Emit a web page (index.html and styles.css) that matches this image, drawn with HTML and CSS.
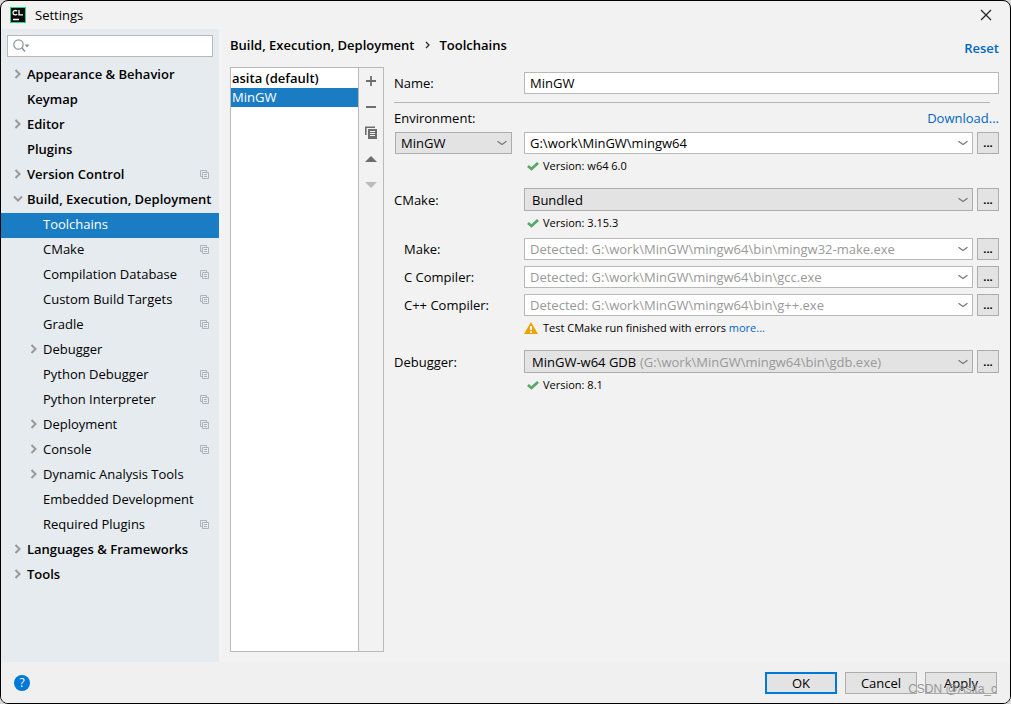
FILE: index.html
```html
<!DOCTYPE html>
<html lang="en">
<head>
<meta charset="utf-8">
<title>Settings</title>
<link rel="stylesheet" href="styles.css">
</head>
<body>
<svg class="sprite" aria-hidden="true">
  <symbol id="right" viewBox="0 0 8 10"><path d="M1.5 1 5.500 5l-4 4" fill="none" stroke="#999" stroke-width="2"/></symbol>
  <symbol id="down" viewBox="0 0 10 8"><path d="M1 1.500 5 5.500l4-4" fill="none" stroke="#999" stroke-width="2"/></symbol>
  <symbol id="project" viewBox="0 0 9 9"><path d="M2 6.500H.5v-6h6V2M2.500 2.500h6v6h-6zM4 4.500h3M4 6.500h3" fill="none" stroke="#a9b4bb"/></symbol>
  <symbol id="chevron" viewBox="0 0 10 6"><path d="M.5 1.200 5 4.500 9.500 1.200" fill="none" stroke="#777" stroke-width="1.200"/></symbol>
  <symbol id="check" viewBox="0 0 12 9"><path d="M1 4 4.500 7 11 1" fill="none" stroke="#59a869" stroke-width="2.800"/></symbol>
</svg>
<div class="dialog">
  <header class="titlebar">
    <svg class="logo" viewBox="0 0 16 16" aria-hidden="true"><path d="M0 0h16v16H0z" fill="#21d789"/><path d="M1 1h14v14H1z" fill="#0b0b0b"/><path d="M7 4.300C6.500 3.300 3 2.800 3 5.700S6.500 8.200 7 7.100M9 3v4.800h4M3 12.500h6" fill="none" stroke="#fff" stroke-width="1.300"/></svg>
    <span>Settings</span>
    <button class="close" aria-label="Close"><svg viewBox="0 0 12 12"><path d="m1 1 10 10M11 1 1 11" fill="none" stroke="#222" stroke-width="1.200"/></svg></button>
  </header>
  <div class="body">
    <nav class="sidebar" aria-label="Settings categories">
      <label class="search">
        <svg viewBox="0 0 17 14" aria-hidden="true"><circle cx="5.500" cy="5.500" r="4.700" fill="none" stroke="#8a959b" stroke-width="1.200"/><path d="m9 9 3 3.500" stroke="#8a959b" stroke-width="1.500"/><path d="M11.500 5.500h5L14 8.500z" fill="#8a959b"/></svg>
        <input type="text" aria-label="Search settings">
      </label>
      <ul class="tree">
        <li class="group"><svg class="arrow"><use href="#right"/></svg><span>Appearance &amp; Behavior</span></li>
        <li class="group"><i class="arrow"></i><span>Keymap</span></li>
        <li class="group"><svg class="arrow"><use href="#right"/></svg><span>Editor</span></li>
        <li class="group"><i class="arrow"></i><span>Plugins</span></li>
        <li class="group"><svg class="arrow"><use href="#right"/></svg><span>Version Control</span><svg class="mark"><use href="#project"/></svg></li>
        <li class="group"><svg class="arrow"><use href="#down"/></svg><span>Build, Execution, Deployment</span></li>
        <li class="child selected"><i class="arrow"></i><span>Toolchains</span></li>
        <li class="child"><i class="arrow"></i><span>CMake</span><svg class="mark"><use href="#project"/></svg></li>
        <li class="child"><i class="arrow"></i><span>Compilation Database</span><svg class="mark"><use href="#project"/></svg></li>
        <li class="child"><i class="arrow"></i><span>Custom Build Targets</span><svg class="mark"><use href="#project"/></svg></li>
        <li class="child"><i class="arrow"></i><span>Gradle</span><svg class="mark"><use href="#project"/></svg></li>
        <li class="child"><svg class="arrow"><use href="#right"/></svg><span>Debugger</span></li>
        <li class="child"><i class="arrow"></i><span>Python Debugger</span><svg class="mark"><use href="#project"/></svg></li>
        <li class="child"><i class="arrow"></i><span>Python Interpreter</span><svg class="mark"><use href="#project"/></svg></li>
        <li class="child"><svg class="arrow"><use href="#right"/></svg><span>Deployment</span><svg class="mark"><use href="#project"/></svg></li>
        <li class="child"><svg class="arrow"><use href="#right"/></svg><span>Console</span><svg class="mark"><use href="#project"/></svg></li>
        <li class="child"><svg class="arrow"><use href="#right"/></svg><span>Dynamic Analysis Tools</span></li>
        <li class="child"><i class="arrow"></i><span>Embedded Development</span></li>
        <li class="child"><i class="arrow"></i><span>Required Plugins</span><svg class="mark"><use href="#project"/></svg></li>
        <li class="group"><svg class="arrow"><use href="#right"/></svg><span>Languages &amp; Frameworks</span></li>
        <li class="group"><svg class="arrow"><use href="#right"/></svg><span>Tools</span></li>
      </ul>
    </nav>
    <main class="page">
      <div class="heading">
        <h1 class="crumbs"><span>Build, Execution, Deployment</span><svg viewBox="0 0 5 8" aria-hidden="true"><path d="m1 1 3 3-3 3" fill="none" stroke="#222" stroke-width="1.200"/></svg><span>Toolchains</span></h1>
        <a class="reset" href="#">Reset</a>
      </div>
      <div class="content">
        <section class="toolchains">
          <ul class="list">
            <li class="default">asita (default)</li>
            <li class="selected">MinGW</li>
          </ul>
          <div class="toolbar">
            <button aria-label="Add"><svg viewBox="0 0 12 12"><path d="M1 6h10M6 1v10" stroke="#6e6e6e" stroke-width="1.800"/></svg></button>
            <button aria-label="Remove"><svg viewBox="0 0 12 12"><path d="M1 6h10" stroke="#6e6e6e" stroke-width="2"/></svg></button>
            <button aria-label="Copy"><svg viewBox="0 0 12 12"><path d="M.8 8V.2H10" fill="none" stroke="#6e6e6e" stroke-width="1.600"/><path d="M3 2h9v10H3z" fill="#6e6e6e"/><path d="M5 4.500h5M5 6.500h5M5 8.500h5" stroke="#f2f2f2"/></svg></button>
            <button aria-label="Move up"><svg viewBox="0 0 12 12"><path d="M0 9h12L6 3z" fill="#6e6e6e"/></svg></button>
            <button aria-label="Move down" disabled><svg viewBox="0 0 12 12"><path d="M0 3h12L6 9z" fill="#bcbcbc"/></svg></button>
          </div>
        </section>
        <form class="form">
          <div class="row">
            <label class="label" for="name">Name:</label>
            <input class="field" id="name" type="text" value="MinGW">
          </div>
          <hr class="rule">
          <div class="env">
            <label for="environment">Environment:</label>
            <a href="#">Download...</a>
          </div>
          <div class="row">
            <div class="label kind">
              <div class="drop"><select id="environment"><option>MinGW</option></select><svg class="chevron"><use href="#chevron"/></svg></div>
            </div>
            <div class="combo"><input type="text" aria-label="Environment path" value="G:\work\MinGW\mingw64"><button type="button" aria-label="Show paths"><svg class="chevron"><use href="#chevron"/></svg></button></div>
            <button class="browse" type="button" aria-label="Browse environment">...</button>
          </div>
          <p class="status"><svg class="check"><use href="#check"/></svg>Version: w64 6.0</p>
          <div class="row section">
            <label class="label" for="cmake">CMake:</label>
            <div class="drop wide"><select id="cmake"><option>Bundled</option></select><svg class="chevron"><use href="#chevron"/></svg></div>
            <button class="browse" type="button" aria-label="Browse CMake">...</button>
          </div>
          <p class="status"><svg class="check"><use href="#check"/></svg>Version: 3.15.3</p>
          <div class="row tool">
            <label class="label" for="make">Make:</label>
            <div class="combo"><input id="make" type="text" placeholder="Detected: G:\work\MinGW\mingw64\bin\mingw32-make.exe"><button type="button" aria-label="Show make tools"><svg class="chevron"><use href="#chevron"/></svg></button></div>
            <button class="browse" type="button" aria-label="Browse make">...</button>
          </div>
          <div class="row tool">
            <label class="label" for="cc">C Compiler:</label>
            <div class="combo"><input id="cc" type="text" placeholder="Detected: G:\work\MinGW\mingw64\bin\gcc.exe"><button type="button" aria-label="Show C compilers"><svg class="chevron"><use href="#chevron"/></svg></button></div>
            <button class="browse" type="button" aria-label="Browse C compiler">...</button>
          </div>
          <div class="row tool">
            <label class="label" for="cxx">C++ Compiler:</label>
            <div class="combo"><input id="cxx" type="text" placeholder="Detected: G:\work\MinGW\mingw64\bin\g++.exe"><button type="button" aria-label="Show C++ compilers"><svg class="chevron"><use href="#chevron"/></svg></button></div>
            <button class="browse" type="button" aria-label="Browse C++ compiler">...</button>
          </div>
          <p class="status"><svg class="warning" viewBox="0 0 14 12" aria-hidden="true"><path d="M7 0 14 12H0z" fill="#eda200"/><path d="M7 4v4M7 9v2" stroke="#fff" stroke-width="1.800"/></svg><span>Test CMake run finished with errors <a href="#">more...</a></span></p>
          <div class="row section">
            <label class="label" for="debugger">Debugger:</label>
            <div class="drop wide"><select id="debugger"><option>MinGW-w64 GDB</option></select><span class="hint">(G:\work\MinGW\mingw64\bin\gdb.exe)</span><svg class="chevron"><use href="#chevron"/></svg></div>
            <button class="browse" type="button" aria-label="Browse debugger">...</button>
          </div>
          <p class="status"><svg class="check"><use href="#check"/></svg>Version: 8.1</p>
        </form>
      </div>
    </main>
  </div>
  <footer class="footer">
    <button class="help" aria-label="Help">?</button>
    <div class="actions">
      <button class="action primary">OK</button>
      <button class="action">Cancel</button>
      <button class="action">Apply</button>
    </div>
    <span class="watermark">CSDN @Asita_c</span>
  </footer>
</div>
</body>
</html>
```
FILE: styles.css
```css
* { box-sizing: border-box; }
body {
  margin: 0;
  background: #d8d8d8;
  color: #000;
  font: 13px/18px "Open Sans", "Noto Sans", sans-serif;
}
ul, p, h1 { margin: 0; padding: 0; list-style: none; }
a { color: #0067c0; text-decoration: none; }
button, input, select { font: inherit; color: inherit; border: 0; padding: 0; margin: 0; border-radius: 0; background: none; outline: 0; }
svg { display: block; flex: none; }
.sprite { display: none; }

.dialog {
  display: flex;
  flex-direction: column;
  min-height: 100vh;
  border: 1px solid #000;
  border-radius: 8px;
  background: #f2f2f2;
  overflow: hidden;
}
.titlebar { display: flex; align-items: center; gap: 9px; height: 28px; padding: 0 18px 0 9px; }
.logo { width: 16px; height: 16px; }
.close { margin-left: auto; }
.close svg { width: 12px; height: 12px; }

.body { display: flex; flex: 1; }
.sidebar { width: 218px; flex: none; padding-top: 6px; background: #e6ebef; }
.search { display: flex; align-items: center; height: 22px; margin: 0 6px 6px; padding: 0 5px; border: 1px solid #b9b9b9; background: #fff; }
.search svg { width: 17px; height: 14px; }
.search input { flex: 1; min-width: 0; }
.tree li { display: flex; align-items: center; height: 25px; padding: 0 10px 3px 0; white-space: nowrap; }
.tree .group { padding-left: 12px; font-weight: 600; }
.tree .child { padding-left: 28px; }
.tree .selected, .list .selected { background: #1a7dc4; color: #fff; }
.arrow { width: 10px; height: 10px; margin-right: 4px; flex: none; }
.mark { width: 9px; height: 9px; margin-left: auto; }

.page { display: flex; flex-direction: column; flex: 1; min-width: 0; padding: 7px 11px 10px; }
.heading { display: flex; justify-content: space-between; height: 31px; }
.crumbs { display: flex; align-items: center; gap: 10px; height: 18px; font-size: 13px; font-weight: 600; }
.crumbs svg { width: 5px; height: 8px; }
.reset { padding-top: 3px; font-weight: 600; }
.content { display: flex; flex: 1; gap: 10px; }

.toolchains { display: flex; width: 154px; flex: none; border: 1px solid #b9b9b9; }
.list { flex: 1; background: #fff; }
.list li { height: 19px; padding-left: 1px; }
.list .default { height: 20px; padding-top: 1px; font-weight: 600; }
.toolbar { display: flex; flex-direction: column; align-items: center; width: 25px; gap: 14px; padding-top: 7px; border-left: 1px solid #b9b9b9; }
.toolbar svg { width: 12px; height: 12px; overflow: visible; }

.form { flex: 1; min-width: 0; padding-top: 5px; }
.row { display: flex; align-items: center; min-height: 22px; }
.label { width: 130px; flex: none; }
.kind { padding: 0 12px 0 1px; }
.field { flex: 1; min-width: 0; height: 22px; padding: 0 5px; border: 1px solid #b9b9b9; background: #fff; }
.rule { height: 1px; margin: 8px 9px 6px 0; border: 0; background: #b4b4b4; }
.env { display: flex; justify-content: space-between; margin-bottom: 5px; }
.drop { display: grid; align-items: center; flex: 1; min-width: 0; height: 22px; border: 1px solid #adadad; background: #e3e3e3; }
.drop > * { grid-area: 1 / 1; }
.drop select { width: 100%; height: 20px; padding-left: 5px; appearance: none; }
.drop .chevron { justify-self: end; margin-right: 4px; pointer-events: none; }
.wide { height: 23px; }
.wide select { padding-left: 7px; }
.hint { padding-left: 115px; color: #999; pointer-events: none; }
.chevron { width: 10px; height: 6px; }
.combo { display: flex; flex: 1; min-width: 0; height: 22px; border: 1px solid #b9b9b9; background: #fff; }
.combo input { flex: 1; min-width: 0; padding-left: 5px; }
.combo input::placeholder { color: #999; opacity: 1; }
.combo button { padding: 0 4px; }
.browse { width: 22px; height: 22px; margin-left: 4px; border: 1px solid #adadad; background: #e3e3e3; font-size: 11px; font-weight: 700; }
.wide + .browse { height: 23px; }
.section { margin-top: 13px; }
.tool { margin-top: 6px; }
.tool .label { padding-left: 10px; }
.status { display: flex; align-items: center; margin: 3px 0 0 130px; font-size: 11px; }
.check { width: 12px; height: 9px; margin: 0 4px 0 3px; }
.warning { width: 14px; height: 12px; margin-right: 5px; }

.footer { position: relative; display: flex; align-items: center; justify-content: space-between; height: 41px; padding: 0 13px; background: #f0f0f0; }
.help { width: 16px; height: 16px; border-radius: 8px; background: #0078d7; color: #fff; font-size: 12px; line-height: 16px; }
.actions { display: flex; gap: 8px; }
.action { width: 72px; height: 22px; border: 1px solid #adadad; background: #e3e3e3; line-height: 18px; }
.primary { border: 2px solid #0078d7; }
.watermark { position: absolute; right: 13px; bottom: 5px; color: #999; font: 12px/18px "Liberation Sans", sans-serif; pointer-events: none; }
```
